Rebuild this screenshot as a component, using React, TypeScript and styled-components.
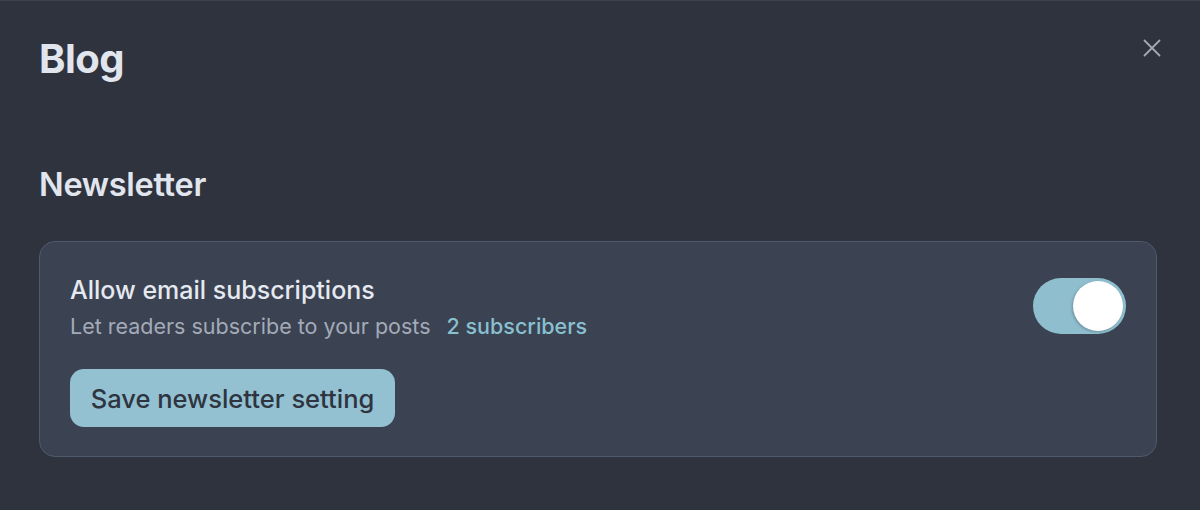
import React, { useState } from "react";
import styled, { createGlobalStyle } from "styled-components";

const Global = createGlobalStyle`
  html, body { margin: 0; padding: 0; background: #2f333e; }
  body { font-family: Inter, "Noto Sans", sans-serif; -webkit-font-smoothing: antialiased; }
  * { box-sizing: border-box; }
`;

const Page = styled.div`
  width: 1200px;
  height: 510px;
  background: #2f333e;
  border-top: 1px solid #3c414e;
  padding: 28px 39px 0 39px;
  display: flex;
  flex-direction: column;
`;

const Header = styled.div`
  display: flex;
  justify-content: space-between;
  align-items: flex-start;
`;

const Title = styled.h1`
  margin: 0;
  font-size: 40px;
  line-height: 60px;
  font-weight: 700;
  color: #e1e5ee;
  letter-spacing: -0.5px;
`;

const Close = styled.button`
  background: none;
  border: none;
  padding: 0;
  margin: 9px -1px 0 0;
  width: 20px;
  height: 20px;
  display: flex;
  align-items: center;
  justify-content: center;
  color: #a3a8b3;
  cursor: pointer;
`;

const SectionTitle = styled.h2`
  margin: 76px 0 0 0;
  font-size: 32.5px;
  line-height: 40px;
  font-weight: 600;
  color: #e1e5ee;
  letter-spacing: -0.3px;
`;

const Card = styled.div`
  margin-top: 36px;
  width: 1118px;
  height: 216px;
  background: #3b4252;
  border: 1px solid #4f5a6c;
  border-radius: 16px;
  padding: 32px 30px 0 30px;
  display: flex;
  flex-direction: column;
`;

const Row = styled.div`
  display: flex;
  justify-content: space-between;
  align-items: flex-start;
`;

const Texts = styled.div`
  display: flex;
  flex-direction: column;
`;

const OptionTitle = styled.div`
  font-size: 25px;
  line-height: 32px;
  font-weight: 500;
  color: #e5e9f0;
`;

const OptionDesc = styled.div`
  margin-top: 6px;
  font-size: 21.5px;
  line-height: 28px;
  color: #a4abb8;
  display: flex;
  gap: 16px;
`;

const Count = styled.span`
  color: #88c0d0;
  font-weight: 500;
`;

const Switch = styled.button<{ $on: boolean }>`
  margin-top: 4px;
  width: 93px;
  height: 56px;
  border-radius: 28px;
  border: none;
  padding: 3px;
  background: ${(p) => (p.$on ? "#8fbfcf" : "#4c566a")};
  display: flex;
  justify-content: ${(p) => (p.$on ? "flex-end" : "flex-start")};
  align-items: center;
  cursor: pointer;
`;

const Knob = styled.span`
  width: 50px;
  height: 50px;
  border-radius: 50%;
  background: #ffffff;
  box-shadow: -1px 1px 3px rgba(0, 0, 0, 0.25);
`;

const SaveButton = styled.button`
  margin-top: 29px;
  align-self: flex-start;
  height: 58px;
  width: 325px;
  padding: 0;
  border: none;
  border-radius: 14px;
  background: #93c1d1;
  color: #2e3440;
  font-family: Inter, "Noto Sans", sans-serif;
  font-size: 25.5px;
  font-weight: 500;
  cursor: pointer;
`;

export default function App() {
  const [on, setOn] = useState(true);
  return (
    <>
      <Global />
      <Page>
        <Header>
          <Title>Blog</Title>
          <Close aria-label="Close">
            <svg width="18" height="18" viewBox="0 0 18 18" fill="none" stroke="currentColor" strokeWidth="1.8" strokeLinecap="round">
              <path d="M1.5 1.5L16.5 16.5M16.5 1.5L1.5 16.5" />
            </svg>
          </Close>
        </Header>
        <SectionTitle>Newsletter</SectionTitle>
        <Card>
          <Row>
            <Texts>
              <OptionTitle>Allow email subscriptions</OptionTitle>
              <OptionDesc>
                <span>Let readers subscribe to your posts</span>
                <Count>2 subscribers</Count>
              </OptionDesc>
            </Texts>
            <Switch $on={on} onClick={() => setOn(!on)} aria-pressed={on}>
              <Knob />
            </Switch>
          </Row>
          <SaveButton>Save newsletter setting</SaveButton>
        </Card>
      </Page>
    </>
  );
}
